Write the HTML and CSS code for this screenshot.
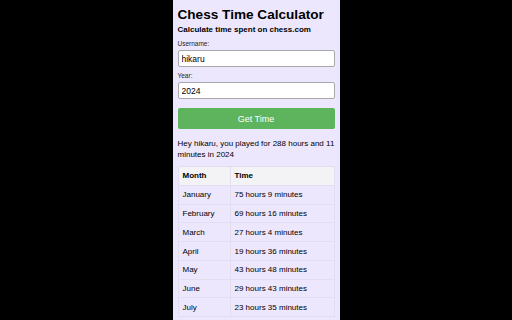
FILE: index.html
```html
<!DOCTYPE html>
<html lang="en">
<head>
    <meta charset="UTF-8">
    <meta name="viewport" content="width=device-width, initial-scale=1.0">
    <title>Chess Time Calculator</title>
    <link rel="stylesheet" href="styles.css">
</head>
<body>
    <div class="popup">
        <h1>Chess Time Calculator</h1>
        <h2>Calculate time spent on chess.com</h2>

        <label for="username">Username:</label>
        <input type="text" id="username" value="hikaru">

        <label for="year">Year:</label>
        <input type="text" id="year" value="2024">

        <button type="button">Get Time</button>

        <p class="result">Hey hikaru, you played for 288 hours and 11 minutes in 2024</p>

        <table>
            <thead>
                <tr><th>Month</th><th>Time</th></tr>
            </thead>
            <tbody>
                <tr><td>January</td><td>75 hours 9 minutes</td></tr>
                <tr><td>February</td><td>69 hours 16 minutes</td></tr>
                <tr><td>March</td><td>27 hours 4 minutes</td></tr>
                <tr><td>April</td><td>19 hours 36 minutes</td></tr>
                <tr><td>May</td><td>43 hours 48 minutes</td></tr>
                <tr><td>June</td><td>29 hours 43 minutes</td></tr>
                <tr><td>July</td><td>23 hours 35 minutes</td></tr>
            </tbody>
        </table>
    </div>
</body>
</html>
```

FILE: styles.css
```css
body {
    margin: 0;
    height: 320px;
    overflow: hidden;
    background-color: #000;
    display: flex;
    justify-content: center;
    font-family: "Liberation Sans", Arial, sans-serif;
    color: #000;
}

/* painel da extensao */
.popup {
    width: 157px;
    padding: 7px 5px 0 5px;
    background-color: #ede7fe;
    min-height: 400px;
}

h1 {
    font-size: 13.6px;
    font-weight: bold;
    margin: 0;
    line-height: 16px;
}

h2 {
    font-size: 8px;
    font-weight: bold;
    margin: 1px 0 0 0;
    line-height: 11px;
}

label {
    display: block;
    font-size: 6.5px;
    line-height: 8px;
    margin-top: 5px;
    margin-bottom: 2px;
    color: #222;
}

input[type="text"] {
    display: block;
    box-sizing: border-box;
    width: 100%;
    height: 17px;
    padding: 0 3px;
    font-family: "Liberation Sans", Arial, sans-serif;
    font-size: 8.5px;
    border: 1px solid #a9a9a9;
    border-radius: 2px;
    background: #fff;
    margin: 0;
}

button {
    display: block;
    width: 100%;
    height: 21px;
    margin-top: 9px;
    background-color: #5db45d;
    color: #fff;
    border: none;
    border-radius: 2px;
    font-family: "Liberation Sans", Arial, sans-serif;
    font-size: 9px;
}

.result {
    font-size: 8px;
    line-height: 11px;
    margin: 9px 0 6px 0;
}

table {
    width: 100%;
    border-collapse: collapse;
    font-size: 8px;
}

th, td {
    text-align: left;
    padding: 4.4px 4px;
    line-height: 9px;
    border: 1px solid #e2def0;
}

th {
    background-color: #f3f2f5;
    font-weight: bold;
}

th:first-child, td:first-child {
    width: 43px;
}
```
